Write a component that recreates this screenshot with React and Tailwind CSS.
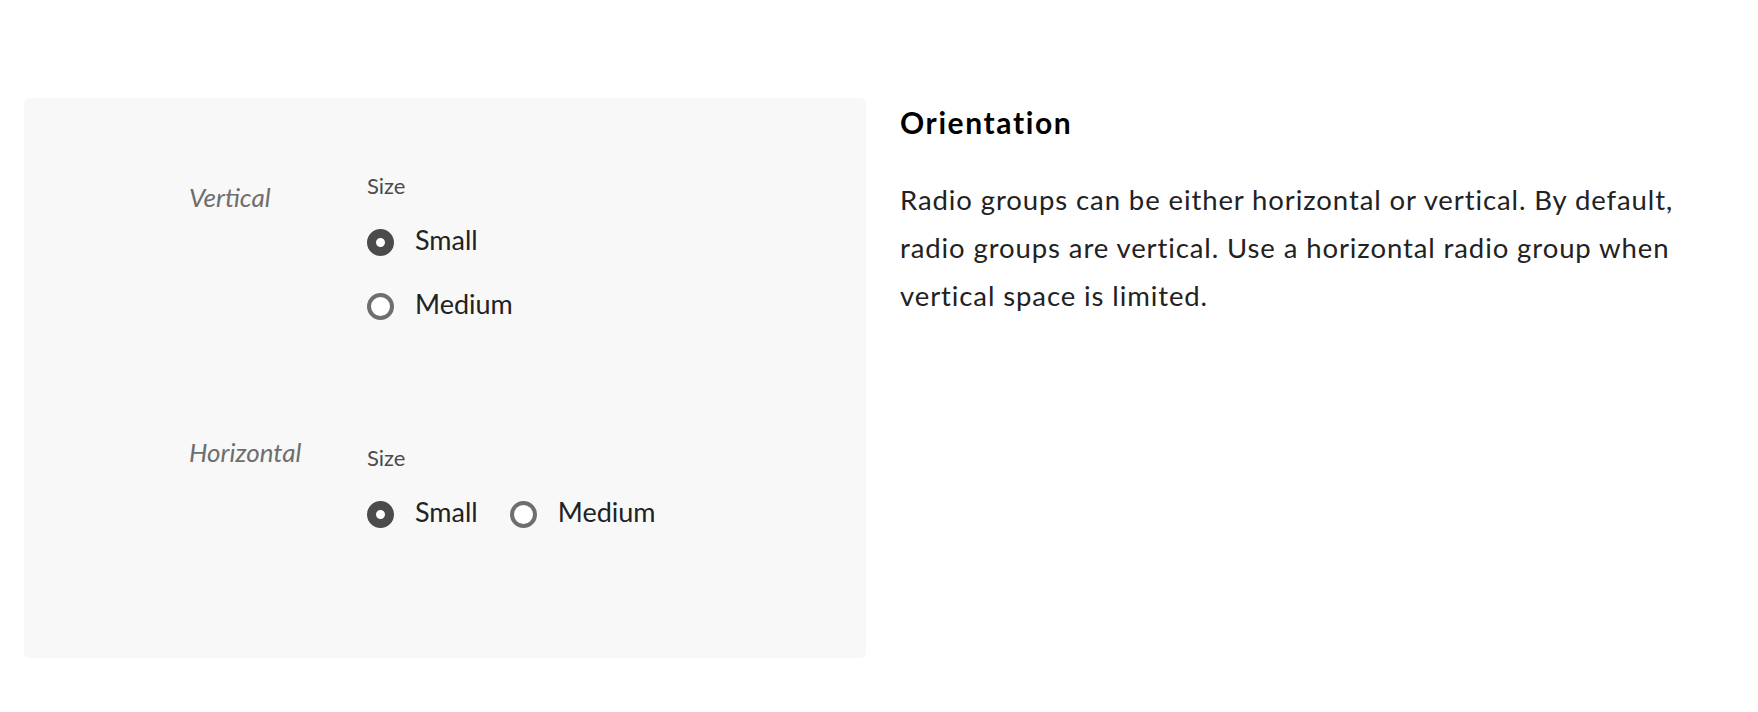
import React from "react";

function Radio({ checked, label }) {
  return (
    <div className="flex items-center gap-[21px]">
      {checked ? (
        <span className="box-border block h-[27px] w-[27px] shrink-0 rounded-full border-[9px] border-[#4b4b4b] bg-white" />
      ) : (
        <span className="box-border block h-[27px] w-[27px] shrink-0 rounded-full border-[4px] border-[#6e6e6e] bg-white" />
      )}
      <span className="pb-[4px] text-[27px] leading-[32px] text-[#222222]">{label}</span>
    </div>
  );
}

export default function App() {
  return (
    <div
      className="min-h-[712px] w-[1758px] bg-white"
      style={{ fontFamily: "Lato, 'Noto Sans', sans-serif" }}
    >
      <div className="flex items-start gap-[34px] pl-[24px] pt-[98px]">
        <div className="h-[560px] w-[842px] shrink-0 rounded-[5px] bg-[#f8f8f8] pl-[165px] pt-[74px]">
          <div className="flex">
            <div className="mt-[9px] w-[178px] text-[26px] italic leading-[32px] text-[#6e6e6e]">
              Vertical
            </div>
            <div className="flex flex-col">
              <div className="mb-[10px] text-[22px] leading-[28px] text-[#4b4b4b]">Size</div>
              <div className="flex h-[64px] items-center">
                <Radio checked label="Small" />
              </div>
              <div className="flex h-[64px] items-center">
                <Radio label="Medium" />
              </div>
            </div>
          </div>

          <div className="mt-[98px] flex">
            <div className="w-[178px] text-[26px] italic leading-[32px] text-[#6e6e6e]">
              Horizontal
            </div>
            <div className="flex flex-col pt-[8px]">
              <div className="mb-[10px] text-[22px] leading-[28px] text-[#4b4b4b]">Size</div>
              <div className="flex h-[64px] items-center gap-[32px]">
                <Radio checked label="Small" />
                <Radio label="Medium" />
              </div>
            </div>
          </div>
        </div>

        <div className="pt-[6px]">
          <h2 className="text-[30px] font-bold leading-[36px] tracking-[1.6px] text-black">
            Orientation
          </h2>
          <p className="mt-[36px] whitespace-nowrap text-[27.5px] leading-[48px] tracking-[0.9px] text-[#222222]">
            Radio groups can be either horizontal or vertical. By default,
            <br />
            radio groups are vertical. Use a horizontal radio group when
            <br />
            vertical space is limited.
          </p>
        </div>
      </div>
    </div>
  );
}
